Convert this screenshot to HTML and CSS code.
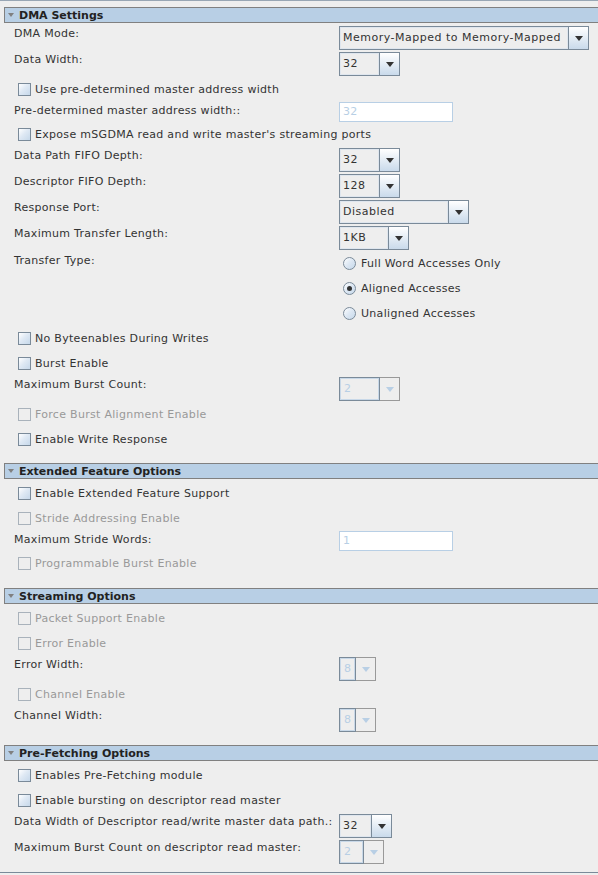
FILE: index.html
```html
<!DOCTYPE html>
<html lang="en">
<head>
    <meta charset="UTF-8">
    <title>mSGDMA Parameters</title>
    <link rel="stylesheet" href="styles.css">
</head>
<body>
    <div class="panel">

        <section class="group">
            <div class="group-head"><span class="caret"></span>DMA Settings</div>
            <div class="row combo-row">
                <span class="lbl">DMA Mode:</span>
                <div class="combo w-mode"><span class="combo-val">Memory-Mapped to Memory-Mapped</span><span class="combo-btn"><i class="arrow"></i></span></div>
            </div>
            <div class="row combo-row">
                <span class="lbl">Data Width:</span>
                <div class="combo w-60"><span class="combo-val">32</span><span class="combo-btn"><i class="arrow"></i></span></div>
            </div>
            <div class="check-row"><span class="box"></span>Use pre-determined master address width</div>
            <div class="row field-row">
                <span class="lbl">Pre-determined master address width::</span>
                <div class="field">32</div>
            </div>
            <div class="check-row"><span class="box"></span>Expose mSGDMA read and write master's streaming ports</div>
            <div class="row combo-row">
                <span class="lbl">Data Path FIFO Depth:</span>
                <div class="combo w-60"><span class="combo-val">32</span><span class="combo-btn"><i class="arrow"></i></span></div>
            </div>
            <div class="row combo-row">
                <span class="lbl">Descriptor FIFO Depth:</span>
                <div class="combo w-60"><span class="combo-val">128</span><span class="combo-btn"><i class="arrow"></i></span></div>
            </div>
            <div class="row combo-row">
                <span class="lbl">Response Port:</span>
                <div class="combo w-130"><span class="combo-val">Disabled</span><span class="combo-btn"><i class="arrow"></i></span></div>
            </div>
            <div class="row combo-row">
                <span class="lbl">Maximum Transfer Length:</span>
                <div class="combo w-70"><span class="combo-val">1KB</span><span class="combo-btn"><i class="arrow"></i></span></div>
            </div>
            <div class="row radio-row">
                <span class="lbl">Transfer Type:</span>
                <div class="radios">
                    <div class="radio-item"><span class="radio"></span>Full Word Accesses Only</div>
                    <div class="radio-item"><span class="radio on"></span>Aligned Accesses</div>
                    <div class="radio-item"><span class="radio"></span>Unaligned Accesses</div>
                </div>
            </div>
            <div class="check-row"><span class="box"></span>No Byteenables During Writes</div>
            <div class="check-row"><span class="box"></span>Burst Enable</div>
            <div class="row combo-row">
                <span class="lbl">Maximum Burst Count:</span>
                <div class="combo w-60 off"><span class="combo-val">2</span><span class="combo-btn"><i class="arrow"></i></span></div>
            </div>
            <div class="check-row off"><span class="box"></span>Force Burst Alignment Enable</div>
            <div class="check-row"><span class="box"></span>Enable Write Response</div>
        </section>

        <section class="group">
            <div class="group-head"><span class="caret"></span>Extended Feature Options</div>
            <div class="check-row"><span class="box"></span>Enable Extended Feature Support</div>
            <div class="check-row off"><span class="box"></span>Stride Addressing Enable</div>
            <div class="row field-row">
                <span class="lbl">Maximum Stride Words:</span>
                <div class="field">1</div>
            </div>
            <div class="check-row off"><span class="box"></span>Programmable Burst Enable</div>
        </section>

        <section class="group">
            <div class="group-head"><span class="caret"></span>Streaming Options</div>
            <div class="check-row off"><span class="box"></span>Packet Support Enable</div>
            <div class="check-row off"><span class="box"></span>Error Enable</div>
            <div class="row combo-row">
                <span class="lbl">Error Width:</span>
                <div class="combo w-36 off"><span class="combo-val">8</span><span class="combo-btn"><i class="arrow"></i></span></div>
            </div>
            <div class="check-row off"><span class="box"></span>Channel Enable</div>
            <div class="row combo-row">
                <span class="lbl">Channel Width:</span>
                <div class="combo w-36 off"><span class="combo-val">8</span><span class="combo-btn"><i class="arrow"></i></span></div>
            </div>
        </section>

        <section class="group last">
            <div class="group-head"><span class="caret"></span>Pre-Fetching Options</div>
            <div class="check-row"><span class="box"></span>Enables Pre-Fetching module</div>
            <div class="check-row"><span class="box"></span>Enable bursting on descriptor read master</div>
            <div class="row combo-row">
                <span class="lbl">Data Width of Descriptor read/write master data path.:</span>
                <div class="combo w-52"><span class="combo-val">32</span><span class="combo-btn"><i class="arrow"></i></span></div>
            </div>
            <div class="row combo-row">
                <span class="lbl">Maximum Burst Count on descriptor read master:</span>
                <div class="combo w-44 off"><span class="combo-val">2</span><span class="combo-btn"><i class="arrow"></i></span></div>
            </div>
        </section>

    </div>
</body>
</html>
```

FILE: styles.css
```css
html, body {
    margin: 0;
    padding: 0;
    height: 875px;
    overflow: hidden;
}
body {
    font-family: "DejaVu Sans", Verdana, sans-serif;
    font-size: 11px;
    letter-spacing: 0.3px;
    color: #333333;
    background-color: #eeeeee;
}
.panel {
    border-top: 1px solid #98a6b4;
    border-bottom: 1px solid #7a8a99;
    height: 871px;
}
.group {
    padding-top: 6px;
    padding-bottom: 5px;
}
.group + .group {
    padding-bottom: 6px;
}
.group-head {
    margin-left: 4px;
    height: 14px;
    line-height: 15px;
    overflow: hidden;
    border: 1px solid #808080;
    border-right: none;
    background-color: #b8cfe5;
    font-weight: bold;
    letter-spacing: 0;
    color: #222;
    padding-left: 14px;
    position: relative;
    margin-bottom: 2px;
}
.caret {
    position: absolute;
    left: 3px;
    top: 5px;
    border-top: 4px solid #808080;
    border-left: 3.5px solid transparent;
    border-right: 3.5px solid transparent;
}
.row {
    display: grid;
    grid-template-columns: 325px auto;
    justify-content: start;
    padding-left: 14px;
}
.combo-row {
    height: 25px;
    padding-top: 1px;
}
.field-row {
    height: 20px;
}
.field-row .lbl {
    padding-top: 1px;
}
.radio-row .lbl {
    padding-top: 2px;
}
.lbl {
    line-height: 16px;
    white-space: nowrap;
}
.check-row {
    height: 25px;
    display: flex;
    align-items: center;
    padding-left: 18px;
    white-space: nowrap;
}
.check-row.off {
    color: #999999;
}
.box {
    width: 11px;
    height: 11px;
    border: 1px solid #7a8a99;
    background: linear-gradient(135deg, #ffffff 0%, #dfe9f4 45%, #c6d8ea 100%);
    margin-right: 4px;
}
.check-row.off .box {
    border-color: #a9b2bb;
    background: #eeeeee;
}
.combo {
    display: flex;
    height: 22px;
    border: 1px solid #7a8a99;
}
.combo-val {
    flex: 1;
    min-width: 0;
    border-right: 1px solid #7a8a99;
    box-shadow: inset 0 0 0 1px #dfe6ee;
    padding-left: 3px;
    line-height: 22px;
    letter-spacing: 0.5px;
    white-space: nowrap;
    overflow: hidden;
}
.combo-btn {
    width: 19px;
    display: flex;
    align-items: center;
    justify-content: center;
    background: linear-gradient(#ffffff, #c9daeb);
}
.arrow {
    display: block;
    border-top: 5px solid #333333;
    border-left: 4.5px solid transparent;
    border-right: 4.5px solid transparent;
}
.combo.off {
    border-color: #999999;
}
.combo.off .combo-val {
    color: #b8cfe5;
    border: 1px solid #7a8a99;
    box-shadow: inset 0 0 0 1px #c8d8e8;
    margin: -1px 0 -1px -1px;
    padding-left: 4px;
}
.combo.off .combo-btn {
    background: #eeeeee;
}
.combo.off .arrow {
    border-top-color: #b8cfe5;
}
.w-mode { width: 248px; }
.w-60 { width: 59px; }
.w-130 { width: 128px; }
.w-70 { width: 68px; }
.w-36 { width: 35px; }
.w-52 { width: 51px; }
.w-44 { width: 43px; }
.field {
    width: 109px;
    height: 18px;
    line-height: 18px;
    background-color: #ffffff;
    border: 1px solid #b8cfe5;
    color: #b8cfe5;
    padding-left: 3px;
}
.radios {
    display: flex;
    flex-direction: column;
}
.radio-item {
    height: 25px;
    display: flex;
    align-items: center;
    padding-left: 4px;
    white-space: nowrap;
}
.radio {
    width: 11px;
    height: 11px;
    border: 1px solid #7a8a99;
    border-radius: 50%;
    background: linear-gradient(135deg, #ffffff 0%, #dfe9f4 45%, #c6d8ea 100%);
    margin-right: 5px;
    display: flex;
    align-items: center;
    justify-content: center;
}
.radio.on::after {
    content: "";
    width: 5px;
    height: 5px;
    border-radius: 50%;
    background-color: #333333;
}
```
